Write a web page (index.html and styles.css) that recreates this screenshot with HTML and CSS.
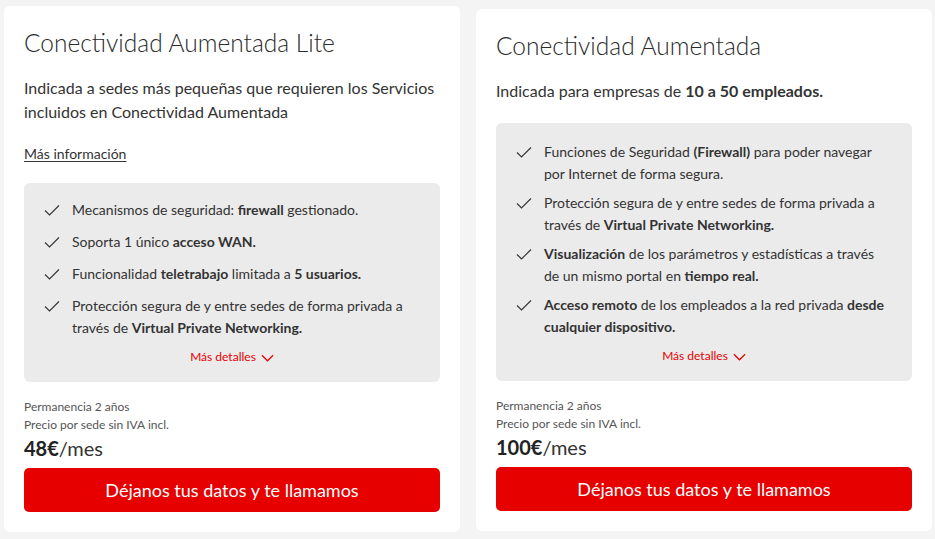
FILE: index.html
```html
<!DOCTYPE html>
<html lang="es">
<head>
<meta charset="utf-8">
<link rel="stylesheet" href="styles.css">
</head>
<body>
<div class="plans">
  <div class="card">
    <h2 class="title">Conectividad Aumentada Lite</h2>
    <p class="desc">Indicada a sedes más pequeñas que requieren los Servicios incluidos en Conectividad Aumentada</p>
    <a class="more-info" href="#">Más información</a>
    <div class="features">
      <ul class="list">
        <li class="item"><svg class="check" viewBox="0 0 16 12"><path d="M1 6.5 L5.5 11 L15 1.5"/></svg><span>Mecanismos de seguridad: <b>firewall</b> gestionado.</span></li>
        <li class="item"><svg class="check" viewBox="0 0 16 12"><path d="M1 6.5 L5.5 11 L15 1.5"/></svg><span>Soporta 1 único <b>acceso WAN.</b></span></li>
        <li class="item"><svg class="check" viewBox="0 0 16 12"><path d="M1 6.5 L5.5 11 L15 1.5"/></svg><span>Funcionalidad <b>teletrabajo</b> limitada a <b>5 usuarios.</b></span></li>
        <li class="item"><svg class="check" viewBox="0 0 16 12"><path d="M1 6.5 L5.5 11 L15 1.5"/></svg><span>Protección segura de y entre sedes de forma privada a través de <b>Virtual Private Networking.</b></span></li>
      </ul>
      <a class="details" href="#">Más detalles <svg class="chev" viewBox="0 0 14 8"><path d="M1 1 L7 7 L13 1"/></svg></a>
    </div>
    <div class="price-info">
      <p class="note">Permanencia 2 años</p>
      <p class="note">Precio por sede sin IVA incl.</p>
      <p class="price"><b>48€</b>/mes</p>
    </div>
    <button class="cta">Déjanos tus datos y te llamamos</button>
  </div>

  <div class="card card-second">
    <h2 class="title">Conectividad Aumentada</h2>
    <p class="desc">Indicada para empresas de <b>10 a 50 empleados.</b></p>
    <div class="features features-tall">
      <ul class="list">
        <li class="item"><svg class="check" viewBox="0 0 16 12"><path d="M1 6.5 L5.5 11 L15 1.5"/></svg><span>Funciones de Seguridad <b>(Firewall)</b> para poder navegar por Internet de forma segura.</span></li>
        <li class="item"><svg class="check" viewBox="0 0 16 12"><path d="M1 6.5 L5.5 11 L15 1.5"/></svg><span>Protección segura de y entre sedes de forma privada a través de <b>Virtual Private Networking.</b></span></li>
        <li class="item"><svg class="check" viewBox="0 0 16 12"><path d="M1 6.5 L5.5 11 L15 1.5"/></svg><span><b>Visualización</b> de los parámetros y estadísticas a través de un mismo portal en <b>tiempo real.</b></span></li>
        <li class="item"><svg class="check" viewBox="0 0 16 12"><path d="M1 6.5 L5.5 11 L15 1.5"/></svg><span><b>Acceso remoto</b> de los empleados a la red privada <b>desde cualquier dispositivo.</b></span></li>
      </ul>
      <a class="details" href="#">Más detalles <svg class="chev" viewBox="0 0 14 8"><path d="M1 1 L7 7 L13 1"/></svg></a>
    </div>
    <div class="price-info">
      <p class="note">Permanencia 2 años</p>
      <p class="note">Precio por sede sin IVA incl.</p>
      <p class="price"><b>100€</b>/mes</p>
    </div>
    <button class="cta">Déjanos tus datos y te llamamos</button>
  </div>
</div>
</body>
</html>
```

FILE: styles.css
```css
* { box-sizing: border-box; }
html, body {
  margin: 0;
  padding: 0;
  background: #f4f4f4;
  font-family: Lato, "Liberation Sans", sans-serif;
  color: #333;
}
.plans {
  display: flex;
  align-items: flex-start;
  gap: 16px;
  padding: 6px 0 0 4px;
}
.card {
  width: 456px;
  background: #fff;
  border-radius: 6px;
  padding: 22px 20px 20px;
  display: flex;
  flex-direction: column;
}
.card-second { margin-top: 3px; }
.title {
  margin: 0;
  font-size: 24.5px;
  line-height: 30px;
  font-weight: 300;
  color: #2a2a2a;
}
.desc {
  margin: 18px 0 0;
  font-size: 16px;
  line-height: 24px;
  color: #333;
}
.desc b { font-weight: 700; }
.more-info {
  margin-top: 20px;
  align-self: flex-start;
  font-size: 14px;
  line-height: 20px;
  color: #333;
  text-decoration: underline;
  text-underline-offset: 2px;
}
.features {
  margin-top: 20px;
  background: #ebebeb;
  border-radius: 6px;
  padding: 16px 20px 16px 20px;
  display: flex;
  flex-direction: column;
}
.features-tall { padding-top: 18px; }
.more-info + .features { margin-top: 19px; }
.list {
  list-style: none;
  margin: 0;
  padding: 0;
  display: flex;
  flex-direction: column;
  gap: 7px;
}
.item {
  display: flex;
  align-items: flex-start;
  min-height: 25px;
  font-size: 14px;
  line-height: 22px;
  color: #333;
}
.item b { font-weight: 700; }
.check {
  flex: 0 0 auto;
  width: 16px;
  height: 12px;
  margin: 5px 12px 0 0;
  fill: none;
  stroke: #333;
  stroke-width: 1.1;
}
.details {
  margin-top: 9px;
  align-self: center;
  font-size: 12px;
  line-height: 18px;
  color: #e60000;
  text-decoration: none;
  display: flex;
  align-items: center;
  gap: 5px;
}
.chev {
  width: 13px;
  height: 8px;
  fill: none;
  stroke: #e60000;
  stroke-width: 1.3;
  margin-top: 2px;
}
.price-info { margin-top: 16px; }
.note {
  margin: 0;
  font-size: 12px;
  line-height: 18px;
  color: #555;
}
.price {
  margin: 0;
  font-size: 20px;
  line-height: 28px;
  color: #333;
}
.price b { font-weight: 700; color: #222; }
.cta {
  margin-top: 6px;
  height: 44px;
  border: 0;
  border-radius: 5px;
  background: #e60000;
  color: #fff;
  font-family: inherit;
  font-size: 18px;
  cursor: pointer;
}
```
